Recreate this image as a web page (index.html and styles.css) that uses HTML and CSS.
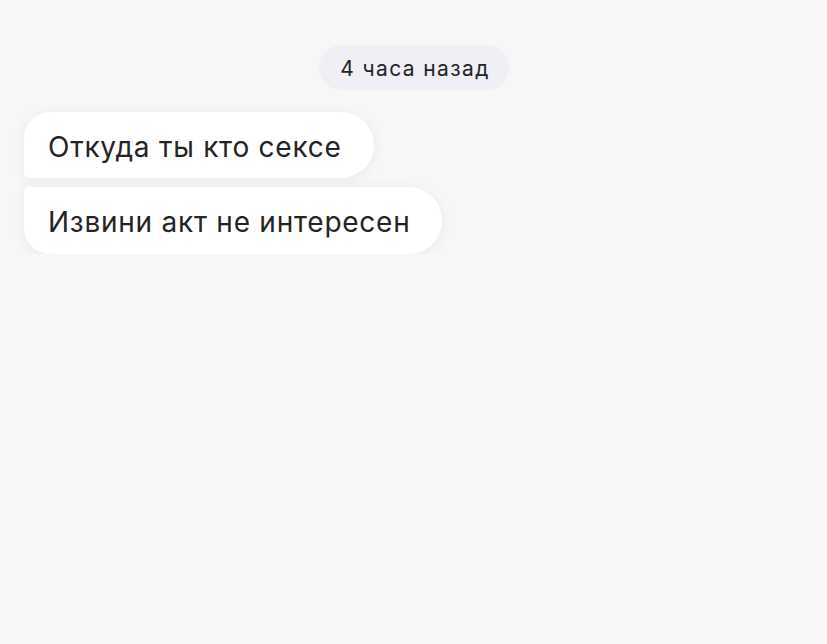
FILE: index.html
```html
<!DOCTYPE html>
<html>
<head>
<meta charset="utf-8">
<title>Чат</title>
<link rel="stylesheet" href="styles.css">
</head>
<body>
<div class="chat">
    <div class="stamp-row">
        <span class="stamp">4 часа назад</span>
    </div>
    <div class="group">
        <div class="bubble first">Откуда ты кто сексе</div>
        <div class="bubble last">Извини акт не интересен</div>
    </div>
</div>
</body>
</html>
```

FILE: styles.css
```css
html, body {
    margin: 0;
    background: #f7f7f7;
}
body {
    font-family: Inter, "Noto Sans", sans-serif;
    color: #242424;
}
.chat {
    padding: 45px 24px 0 24px;
}
.stamp-row {
    display: flex;
    justify-content: center;
    padding-left: 1px;
}
.stamp {
    background: #f0eff6;
    border-radius: 23px;
    height: 45px;
    box-sizing: border-box;
    padding: 2px 19px 0 21px;
    line-height: 43px;
    font-size: 21px;
    letter-spacing: 1.4px;
}
.group {
    display: flex;
    flex-direction: column;
    align-items: flex-start;
    gap: 9px;
    margin-top: 22px;
}
.bubble {
    background: #ffffff;
    height: 66px;
    box-sizing: border-box;
    padding: 4px 32px 0 24px;
    line-height: 62px;
    font-size: 28px;
    letter-spacing: 0.75px;
    box-shadow: 0 2px 14px rgba(0, 0, 0, 0.06);
}
.bubble.first {
    border-radius: 26px 33px 33px 5px;
}
.bubble.last {
    border-radius: 5px 33px 33px 26px;
    height: 67px;
}
```
